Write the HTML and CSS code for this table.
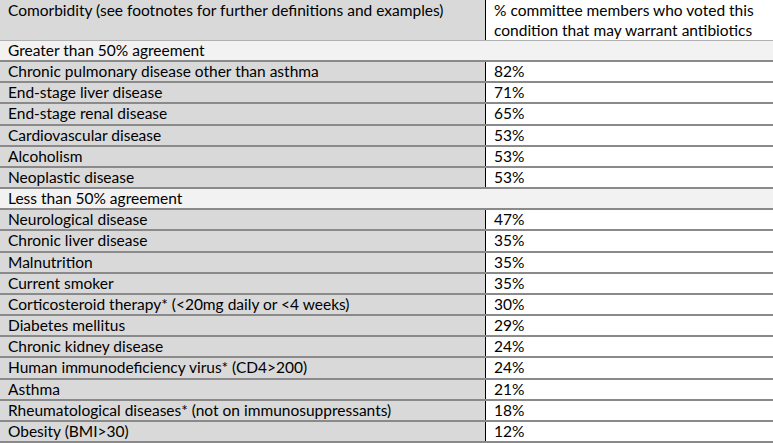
FILE: index.html
```html
<!DOCTYPE html>
<html>
<head>
<meta charset="utf-8">
<link rel="stylesheet" href="styles.css">
</head>
<body>
<table class="tbl">
  <tr class="head">
    <td class="c1">Comorbidity (see footnotes for further definitions and examples)</td>
    <td class="c2">% committee members who voted this condition that may warrant antibiotics</td>
  </tr>
  <tr class="group"><td colspan="2">Greater than 50% agreement</td></tr>
  <tr><td class="c1">Chronic pulmonary disease other than asthma</td><td class="c2">82%</td></tr>
  <tr><td class="c1">End-stage liver disease</td><td class="c2">71%</td></tr>
  <tr><td class="c1">End-stage renal disease</td><td class="c2">65%</td></tr>
  <tr><td class="c1">Cardiovascular disease</td><td class="c2">53%</td></tr>
  <tr><td class="c1">Alcoholism</td><td class="c2">53%</td></tr>
  <tr><td class="c1">Neoplastic disease</td><td class="c2">53%</td></tr>
  <tr class="group"><td colspan="2">Less than 50% agreement</td></tr>
  <tr><td class="c1">Neurological disease</td><td class="c2">47%</td></tr>
  <tr><td class="c1">Chronic liver disease</td><td class="c2">35%</td></tr>
  <tr><td class="c1">Malnutrition</td><td class="c2">35%</td></tr>
  <tr><td class="c1">Current smoker</td><td class="c2">35%</td></tr>
  <tr><td class="c1">Corticosteroid therapy* (&lt;20mg daily or &lt;4 weeks)</td><td class="c2">30%</td></tr>
  <tr><td class="c1">Diabetes mellitus</td><td class="c2">29%</td></tr>
  <tr><td class="c1">Chronic kidney disease</td><td class="c2">24%</td></tr>
  <tr><td class="c1">Human immunodeficiency virus* (CD4&gt;200)</td><td class="c2">24%</td></tr>
  <tr><td class="c1">Asthma</td><td class="c2">21%</td></tr>
  <tr><td class="c1">Rheumatological diseases* (not on immunosuppressants)</td><td class="c2">18%</td></tr>
  <tr><td class="c1">Obesity (BMI&gt;30)</td><td class="c2">12%</td></tr>
</table>
</body>
</html>
```
FILE: styles.css
```css
html, body {
  margin: 0;
  padding: 0;
  background: #ffffff;
}
.tbl {
  width: 773px;
  border-collapse: collapse;
  font-family: Lato, "Open Sans", sans-serif;
  font-size: 15.5px;
  color: #000;
}
.tbl td {
  padding: 0 0 0 8px;
  height: 19.16px;
  line-height: 19.16px;
  border-bottom: 2px solid #8a8a8a;
  vertical-align: top;
  white-space: nowrap;
}
.tbl .c1 {
  width: 477px;
  background: #d9d9d9;
  border-right: 1px solid #000;
}
.tbl .c2 {
  background: #ffffff;
  padding-left: 8px;
}
.head td {
  height: 39px;
  line-height: 20px;
  border-bottom: 1px solid #b0b0b0;
}
.head .c2 {
  white-space: normal;
}
.group td {
  background: #f2f2f2;
}
```
